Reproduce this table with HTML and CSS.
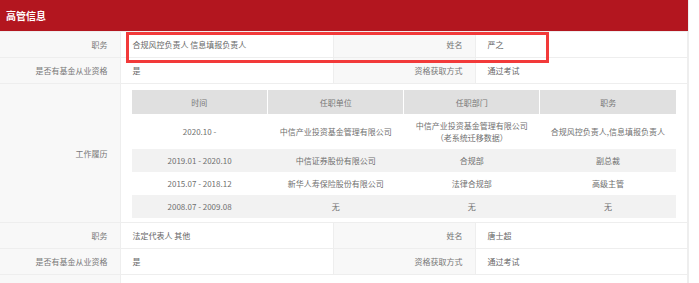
FILE: index.html
```html
<!DOCTYPE html>
<html lang="zh-CN">
<head>
<meta charset="utf-8">
<title>高管信息</title>
<link rel="stylesheet" href="styles.css">
</head>
<body>
<div class="panel">
  <div class="title">高管信息</div>
  <table class="info">
    <colgroup>
      <col class="c-label1">
      <col class="c-value1">
      <col class="c-label2">
      <col class="c-value2">
    </colgroup>
    <tr>
      <td class="label">职务</td>
      <td class="value">合规风控负责人 信息填报负责人</td>
      <td class="label">姓名</td>
      <td class="value">严之</td>
    </tr>
    <tr>
      <td class="label">是否有基金从业资格</td>
      <td class="value">是</td>
      <td class="label">资格获取方式</td>
      <td class="value">通过考试</td>
    </tr>
    <tr>
      <td class="label">工作履历</td>
      <td class="history" colspan="3">
        <table class="jobs">
          <tr>
            <th>时间</th>
            <th>任职单位</th>
            <th>任职部门</th>
            <th>职务</th>
          </tr>
          <tr>
            <td>2020.10 -</td>
            <td>中信产业投资基金管理有限公司</td>
            <td>中信产业投资基金管理有限公司<br>（老系统迁移数据）</td>
            <td>合规风控负责人,信息填报负责人</td>
          </tr>
          <tr class="alt">
            <td>2019.01 - 2020.10</td>
            <td>中信证券股份有限公司</td>
            <td>合规部</td>
            <td>副总裁</td>
          </tr>
          <tr>
            <td>2015.07 - 2018.12</td>
            <td>新华人寿保险股份有限公司</td>
            <td>法律合规部</td>
            <td>高级主管</td>
          </tr>
          <tr class="alt">
            <td>2008.07 - 2009.08</td>
            <td>无</td>
            <td>无</td>
            <td>无</td>
          </tr>
        </table>
      </td>
    </tr>
    <tr>
      <td class="label">职务</td>
      <td class="value">法定代表人 其他</td>
      <td class="label">姓名</td>
      <td class="value">唐士超</td>
    </tr>
    <tr>
      <td class="label">是否有基金从业资格</td>
      <td class="value">是</td>
      <td class="label">资格获取方式</td>
      <td class="value">通过考试</td>
    </tr>
    <tr>
      <td class="label"></td>
      <td class="value" colspan="3"></td>
    </tr>
  </table>
  <div class="mark"></div>
</div>
</body>
</html>
```

FILE: styles.css
```css
html, body {
  margin: 0;
  padding: 0;
  background: #ffffff;
}

body {
  font-family: "Noto Sans CJK SC", "Noto Sans", sans-serif;
  font-size: 8px;
  color: #666666;
}

.panel {
  position: relative;
  width: 689px;
  border-right: 1px solid #eeeeee;
  box-sizing: border-box;
}

.title {
  height: 31px;
  line-height: 31px;
  background: #b3161f;
  color: #ffffff;
  font-size: 10px;
  font-weight: bold;
  padding-left: 6px;
  border-bottom: 1px solid #eeeeee;
}

.info {
  width: 688px;
  border-collapse: collapse;
  table-layout: fixed;
}

.c-label1 { width: 120px; }
.c-value1 { width: 213px; }
.c-label2 { width: 142px; }
.c-value2 { width: auto; }

.info > tbody > tr > td {
  height: 25px;
  padding: 0;
  border-bottom: 1px solid #eeeeee;
  border-right: 1px solid #eeeeee;
  vertical-align: middle;
}

.label {
  background: #f8f8f8;
  text-align: right;
  padding-right: 12px !important;
  color: #777777;
}

.value {
  background: #ffffff;
  text-align: left;
  padding-left: 12px !important;
  color: #666666;
}

.info > tbody > tr > td.history {
  padding: 6px 11px 4px 11px;
  background: #ffffff;
}

.jobs {
  width: 100%;
  border-collapse: collapse;
  table-layout: fixed;
}

.jobs th {
  height: 24px;
  padding: 0;
  background: #e0e0e0;
  font-weight: normal;
  color: #777777;
  border-left: 1px solid #ffffff;
  text-align: center;
}

.jobs th:first-child {
  border-left: none;
}

.jobs td {
  padding: 6px 4px 5px;
  line-height: 12px;
  text-align: center;
  color: #6f6f6f;
  background: #ffffff;
}

.jobs tr.alt td {
  background: #f2f2f2;
}

.mark {
  position: absolute;
  left: 126px;
  top: 32px;
  width: 423px;
  height: 31px;
  border: 3px solid #f23a3a;
  box-sizing: border-box;
}
```
